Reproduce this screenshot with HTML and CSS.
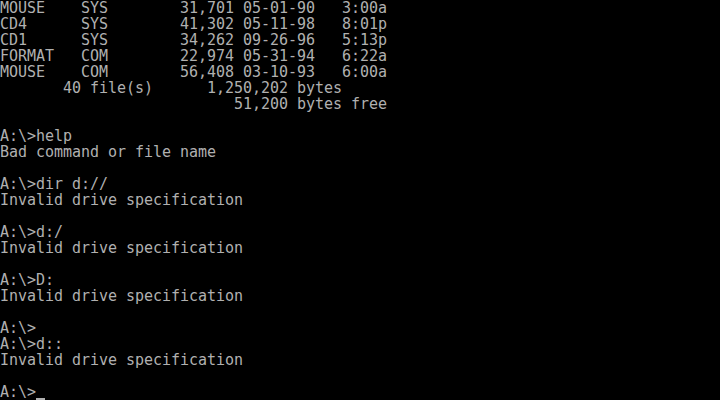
FILE: index.html
```html
<!DOCTYPE html>
<html lang="en">
<head>
  <meta charset="UTF-8" />
  <title>A:\</title>
  <link rel="stylesheet" href="styles.css">
</head>
<body>
<pre class="screen">MOUSE    SYS        31,701 05-01-90   3:00a
CD4      SYS        41,302 05-11-98   8:01p
CD1      SYS        34,262 09-26-96   5:13p
FORMAT   COM        22,974 05-31-94   6:22a
MOUSE    COM        56,408 03-10-93   6:00a
       40 file(s)      1,250,202 bytes
                          51,200 bytes free

A:\>help
Bad command or file name

A:\>dir d://
Invalid drive specification

A:\>d:/
Invalid drive specification

A:\>D:
Invalid drive specification

A:\>
A:\>d::
Invalid drive specification

A:\><span class="cursor"></span></pre>
</body>
</html>
```

FILE: styles.css
```css
html, body {
  margin: 0;
  padding: 0;
  background: #000;
}
.screen {
  margin: 0;
  width: 720px;
  height: 400px;
  overflow: hidden;
  color: #b0b0b0;
  font-family: "DejaVu Sans Mono", "Liberation Mono", monospace;
  font-size: 15px;
  line-height: 16px;
  letter-spacing: -0.03px;
  white-space: pre;
}
.cursor {
  display: inline-block;
  width: 9px;
  height: 2px;
  background: #b0b0b0;
  vertical-align: -3px;
}
```
